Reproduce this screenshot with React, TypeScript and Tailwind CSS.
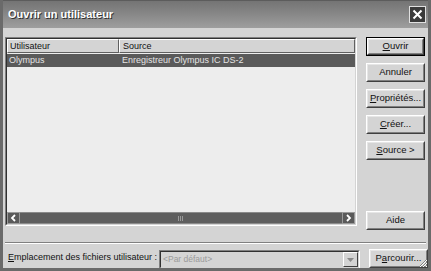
import React from "react";

const font = { fontFamily: '"Liberation Sans", Arial, sans-serif' };

function Btn({ children, def = false, className = "" }: { children: React.ReactNode; def?: boolean; className?: string }) {
  const inner = (
    <div className="w-full h-full border border-t-white border-l-white border-b-[#404040] border-r-[#404040] bg-[#d4d4d4]">
      <div className="w-full h-full border border-t-[#e6e6e6] border-l-[#e6e6e6] border-b-[#808080] border-r-[#808080] flex items-center justify-center text-[9.5px] text-[#111] whitespace-nowrap">
        {children}
      </div>
    </div>
  );
  return (
    <div className={`w-[59px] h-[19px] shrink-0 ${className}`}>
      {def ? <div className="w-full h-full border border-black">{inner}</div> : inner}
    </div>
  );
}

function Arrow({ dir }: { dir: "l" | "r" }) {
  return (
    <div className="w-[13px] h-[12px] bg-[#5a5a5a] border border-[#9a9a9a] flex items-center justify-center">
      <svg width="7" height="8" viewBox="0 0 7 8">
        {dir === "l" ? (
          <path d="M5 1 L2 4 L5 7" stroke="white" strokeWidth="1.8" fill="none" />
        ) : (
          <path d="M2 1 L5 4 L2 7" stroke="white" strokeWidth="1.8" fill="none" />
        )}
      </svg>
    </div>
  );
}

export default function App() {
  return (
    <div style={font} className="w-[431px] h-[271px] bg-[#d4d4d4] flex flex-col overflow-hidden border-l-[3px] border-r-[3px] border-b-[3px] border-[#6a6a6a] relative">
      {/* title bar */}
      <div className="h-[28px] shrink-0 -mx-[3px] flex items-center justify-between pl-[8px] pr-[4px] bg-gradient-to-b from-[#747474] via-[#888888] to-[#9e9e9e] border-t border-[#5c5c5c]">
        <span className="text-white font-bold text-[11px] [text-shadow:1px_1px_0_#333]">
          Ouvrir un utilisateur
        </span>
        <div className="w-[17px] h-[17px] bg-[#3a3a3a] border border-[#e0e0e0] flex items-center justify-center mr-[1px]">
          <svg width="11" height="11" viewBox="0 0 11 11">
            <path d="M1.5 1.5 L9.5 9.5 M9.5 1.5 L1.5 9.5" stroke="white" strokeWidth="2" />
          </svg>
        </div>
      </div>

      <div className="flex pt-[9px] pl-[2px] shrink-0">
        {/* list */}
        <div className="w-[352px] h-[189px] border border-t-[#808080] border-l-[#808080] border-b-white border-r-white">
          <div className="w-full h-full border border-t-[#303030] border-l-[#303030] border-b-[#d4d4d4] border-r-[#d4d4d4] bg-[#ededed] flex flex-col">
            <div className="flex h-[14px] text-[9px] text-[#111]">
              <div className="w-[112px] border border-t-white border-l-white border-b-[#606060] border-r-[#606060] bg-[#d4d4d4] pl-[2px] leading-[12px]">Utilisateur</div>
              <div className="flex-1 border border-t-white border-l-white border-b-[#606060] border-r-[#606060] bg-[#d4d4d4] pl-[3px] leading-[12px]">Source</div>
            </div>
            <div className="flex h-[13px] mt-[1px] bg-[#5a5a5a] text-[9px] text-[#e4e4e4] leading-[13px]">
              <div className="w-[112px] pl-[2px]">Olympus</div>
              <div className="flex-1 pl-[3px]">Enregistreur Olympus IC DS-2</div>
            </div>
            <div className="flex-1" />
            <div className="flex h-[12px] items-stretch">
              <Arrow dir="l" />
              <div className="flex-1 bg-[#5e5e5e] border-t border-b border-[#8a8a8a] flex items-center justify-center">
                <svg width="6" height="5" viewBox="0 0 6 5">
                  <path d="M0.5 0 V5 M2.5 0 V5 M4.5 0 V5" stroke="#9a9a9a" strokeWidth="1" />
                </svg>
              </div>
              <Arrow dir="r" />
            </div>
          </div>
        </div>

        {/* buttons */}
        <div className="ml-[9px] flex flex-col">
          <Btn def><span><u>O</u>uvrir</span></Btn>
          <Btn className="mt-[7px]">Annuler</Btn>
          <Btn className="mt-[7px]"><span><u>P</u>ropriétés...</span></Btn>
          <Btn className="mt-[7px]"><span><u>C</u>réer...</span></Btn>
          <Btn className="mt-[7px]"><span><u>S</u>ource &gt;</span></Btn>
          <Btn className="mt-[51px]">Aide</Btn>
        </div>
      </div>

      {/* separator */}
      <div className="mt-[12px] mx-[2px] h-[2px] shrink-0 border-t border-[#808080] border-b border-b-white" />

      <div className="flex items-center mt-[3px] pl-[5px] shrink-0">
        <span className="w-[146px] shrink-0 whitespace-nowrap text-[9px] text-[#111]"><u>E</u>mplacement des fichiers utilisateur :</span>
        <div className="ml-[5px] mt-[3px] w-[201px] h-[19px] shrink-0 border border-t-[#808080] border-l-[#808080] border-b-white border-r-white">
          <div className="w-full h-full border border-t-[#303030] border-l-[#303030] border-b-[#d4d4d4] border-r-[#d4d4d4] flex items-center">
            <span className="flex-1 pl-[2px] text-[8.5px] text-[#9a9a9a]">&lt;Par défaut&gt;</span>
            <div className="w-[15px] h-full border border-t-white border-l-white border-b-[#404040] border-r-[#404040] bg-[#d4d4d4] flex items-center justify-center">
              <svg width="7" height="4" viewBox="0 0 7 4"><path d="M0 0 H7 L3.5 4 Z" fill="#8a8a8a" /></svg>
            </div>
          </div>
        </div>
        <Btn className="ml-[9px]"><span>P<u>a</u>rcourir...</span></Btn>
      </div>

      {/* resize grip */}
      <svg className="absolute right-0 bottom-0" width="11" height="11" viewBox="0 0 11 11">
        <path d="M10 2 L2 10 M10 5 L5 10 M10 8 L8 10" stroke="#808080" strokeWidth="1" />
        <path d="M10 3 L3 10 M10 6 L6 10 M10 9 L9 10" stroke="white" strokeWidth="1" />
      </svg>
    </div>
  );
}
